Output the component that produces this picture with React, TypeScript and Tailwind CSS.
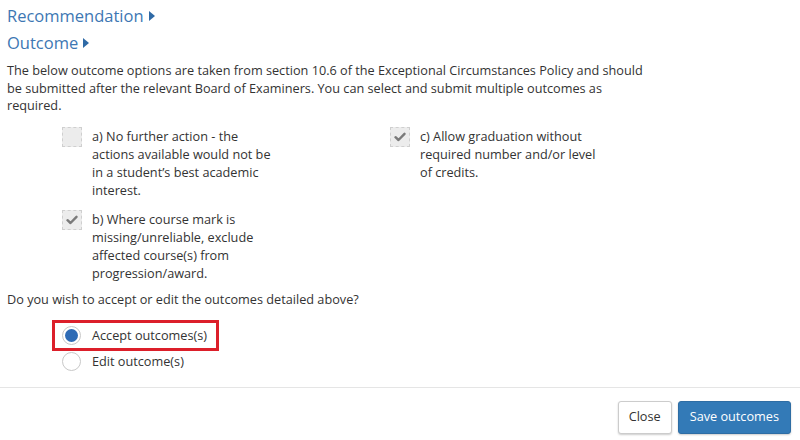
import React from "react";

const FONT = { fontFamily: '"Open Sans", "Liberation Sans", sans-serif' };

function Caret() {
  return (
    <svg width="6" height="10" viewBox="0 0 6 10" className="ml-[5px] inline-block">
      <path d="M0 0 L6 5 L0 10 Z" fill="#2f6aa6" />
    </svg>
  );
}

function Check({ checked }: { checked: boolean }) {
  return (
    <span className="flex h-[20px] w-[20px] shrink-0 items-center justify-center border border-dashed border-[#cfcfcf] bg-[#ececec]">
      {checked && (
        <svg width="12" height="10" viewBox="0 0 12 10">
          <path d="M1.5 5.2 L4.5 8 L10.5 1.8" fill="none" stroke="#7a7a7a" strokeWidth="2.4" strokeLinecap="round" strokeLinejoin="round" />
        </svg>
      )}
    </span>
  );
}

function Option({ checked, children }: { checked: boolean; children: React.ReactNode }) {
  return (
    <div className="flex items-start gap-[10px]">
      <Check checked={checked} />
      <p className="w-[186px] text-[12.7px] leading-[18px] text-[#333]">{children}</p>
    </div>
  );
}

function Radio({ selected }: { selected: boolean }) {
  return (
    <span className="flex h-[19px] w-[19px] items-center justify-center rounded-full border border-[#c8c8c8] bg-white">
      {selected && <span className="h-[13px] w-[13px] rounded-full bg-[#2e6bb5]" />}
    </span>
  );
}

export default function App() {
  return (
    <div className="h-[440px] w-[800px] overflow-hidden bg-white text-[#333]" style={FONT}>
      <div className="px-[7px]">
        <h3 className="flex items-center pt-[4px] text-[16.5px] leading-[24px] text-[#3d77b3]">
          Recommendation
          <Caret />
        </h3>
        <h3 className="mt-[3px] flex items-center text-[16.5px] leading-[24px] text-[#3d77b3]">
          Outcome
          <Caret />
        </h3>
        <p className="mt-[7px] w-[650px] text-[12.7px] leading-[17.5px]">
          The below outcome options are taken from section 10.6 of the Exceptional Circumstances Policy and should be
          submitted after the relevant Board of Examiners. You can select and submit multiple outcomes as required.
        </p>

        <div className="mt-[12px] ml-[55px] grid grid-cols-[328px_328px] gap-y-[11px]">
          <Option checked={false}>
            a) No further action - the actions available would not be in a student’s best academic interest.
          </Option>
          <Option checked={true}>c) Allow graduation without required number and/or level of credits.</Option>
          <Option checked={true}>
            b) Where course mark is missing/unreliable, exclude affected course(s) from progression/award.
          </Option>
        </div>

        <p className="mt-[8px] text-[12.7px] leading-[18px]">Do you wish to accept or edit the outcomes detailed above?</p>

        <div className="mt-[12px] ml-[45px] flex flex-col items-start">
          <div className="flex h-[31px] w-[167px] items-center gap-[11px] border-[3px] border-[#dc1f2a] pl-[7px]">
            <Radio selected={true} />
            <span className="text-[12.7px] leading-[18px]">Accept outcomes(s)</span>
          </div>
          <div className="mt-[1px] flex items-center gap-[11px] pl-[10px]">
            <Radio selected={false} />
            <span className="text-[12.7px] leading-[18px]">Edit outcome(s)</span>
          </div>
        </div>
      </div>

      <div className="mt-[16px] flex justify-end gap-[6px] border-t border-[#e5e5e5] px-[9px] pt-[13px]">
        <button className="h-[33px] rounded-[3px] border border-[#ccc] bg-white px-[10px] text-[12.7px] text-[#333] shadow-[0_1px_2px_rgba(0,0,0,0.2)]">
          Close
        </button>
        <button className="h-[33px] rounded-[3px] border border-[#2e6da4] bg-[#337ab7] px-[11px] text-[12.7px] text-white shadow-[0_1px_2px_rgba(0,0,0,0.2)]">
          Save outcomes
        </button>
      </div>
    </div>
  );
}
